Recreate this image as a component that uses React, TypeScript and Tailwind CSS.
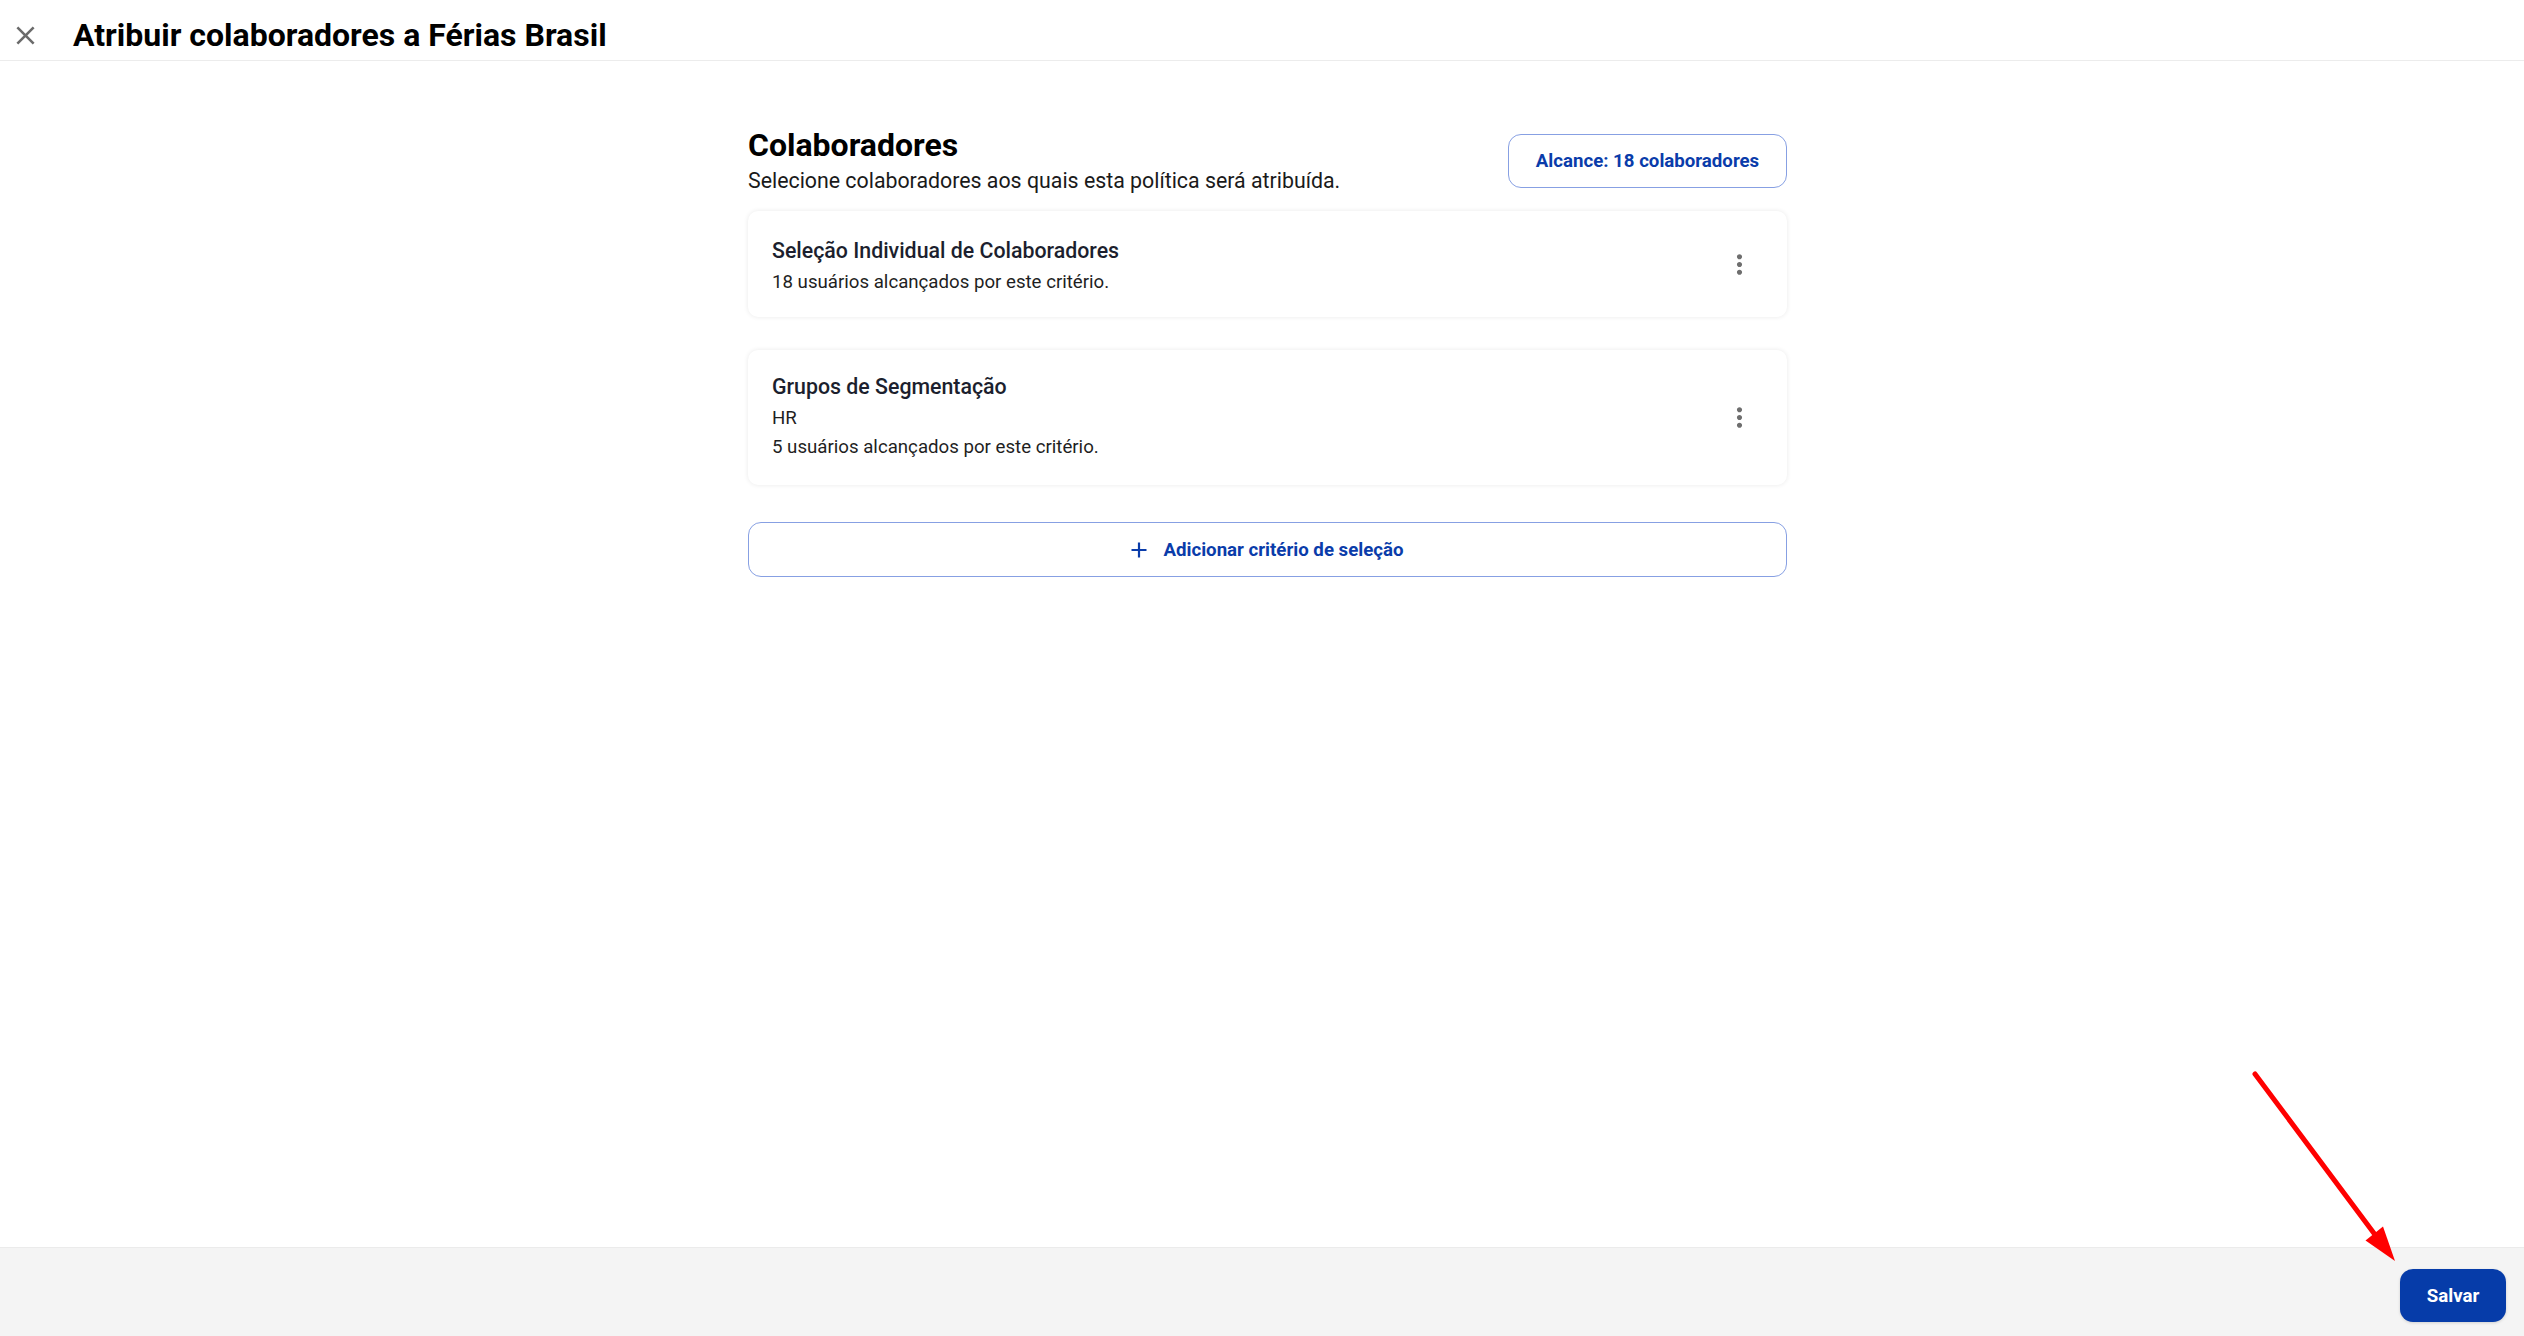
import React from "react";

function CloseIcon() {
  return (
    <svg width="31" height="31" viewBox="0 0 24 24" fill="#6b6b6b">
      <path d="M19 6.41L17.59 5 12 10.59 6.41 5 5 6.41 10.59 12 5 17.59 6.41 19 12 13.41 17.59 19 19 17.59 13.41 12z" />
    </svg>
  );
}

function MoreVert() {
  return (
    <svg width="31" height="31" viewBox="0 0 24 24" fill="#6e6e6e">
      <path d="M12 8c1.1 0 2-.9 2-2s-.9-2-2-2-2 .9-2 2 .9 2 2 2zm0 2c-1.1 0-2 .9-2 2s.9 2 2 2 2-.9 2-2-.9-2-2-2zm0 6c-1.1 0-2 .9-2 2s.9 2 2 2 2-.9 2-2-.9-2-2-2z" />
    </svg>
  );
}

function PlusIcon() {
  return (
    <svg width="16" height="16" viewBox="0 0 16 16" fill="none" stroke="#0a3caa" strokeWidth="2.2">
      <path d="M8 0.5v15M0.5 8h15" />
    </svg>
  );
}

export default function App() {
  return (
    <div className="relative min-h-screen flex flex-col bg-white font-[Roboto,sans-serif] text-black">
      <header className="h-[61px] border-b border-[#ececec] pt-[15px] shrink-0">
        <div className="flex items-center h-[40px]">
          <div className="w-[31px] h-[31px] ml-[10px] flex items-center justify-center">
            <CloseIcon />
          </div>
          <h1 className="ml-[32px] text-[32px] leading-[40px] font-bold text-black">
            Atribuir colaboradores a Férias Brasil
          </h1>
        </div>
      </header>

      <main className="flex-1 flex justify-center pl-[11px] pt-[66px]">
        <div className="w-[1039px]">
          <div className="flex justify-between items-start">
            <div>
              <h2 className="text-[32px] leading-[37px] font-bold text-black">Colaboradores</h2>
              <p className="mt-[3px] text-[21.33px] leading-[28px] text-[#1a1a1a]">
                Selecione colaboradores aos quais esta política será atribuída.
              </p>
            </div>
            <button className="mt-[7px] w-[279px] h-[54px] rounded-[13px] border border-[#87a0e3] bg-white flex items-center justify-center text-[18.67px] font-bold text-[#0a3caa]">
              Alcance: 18 colaboradores
            </button>
          </div>

          <div className="mt-[16px] rounded-[10px] bg-white shadow-[0_0_5px_rgba(0,0,0,0.09)] flex items-center justify-between pl-[24px] pr-[32px]">
            <div className="pt-[26px] pb-[22px]">
              <div className="text-[21.33px] leading-[28px] font-medium text-[#1c1f2e]">
                Seleção Individual de Colaboradores
              </div>
              <div className="mt-[4px] text-[18.67px] leading-[26px] text-[#1f1f1f]">
                18 usuários alcançados por este critério.
              </div>
            </div>
            <MoreVert />
          </div>

          <div className="mt-[33px] rounded-[10px] bg-white shadow-[0_0_5px_rgba(0,0,0,0.09)] flex items-center justify-between pl-[24px] pr-[32px]">
            <div className="pt-[23px] pb-[25px]">
              <div className="text-[21.33px] leading-[28px] font-medium text-[#1c1f2e]">
                Grupos de Segmentação
              </div>
              <div className="mt-[4px] text-[18.67px] leading-[26px] text-[#1f1f1f]">HR</div>
              <div className="mt-[3px] text-[18.67px] leading-[26px] text-[#1f1f1f]">
                5 usuários alcançados por este critério.
              </div>
            </div>
            <MoreVert />
          </div>

          <button className="mt-[37px] w-full h-[55px] rounded-[13px] border border-[#87a0e3] bg-white flex items-center justify-center gap-[16px] text-[18.67px] font-bold text-[#0a3caa]">
            <PlusIcon />
            <span>Adicionar critério de seleção</span>
          </button>
        </div>
      </main>

      <footer className="h-[89px] shrink-0 bg-[#f4f4f4] border-t border-[#ebebeb] flex justify-end items-start pt-[21px] pr-[18px]">
        <button className="w-[106px] h-[53px] rounded-[13px] bg-[#063ca9] text-white text-[18.67px] font-bold shadow-[0_1px_3px_rgba(0,0,0,0.15)]">
          Salvar
        </button>
      </footer>

      <svg className="absolute left-0 top-0 pointer-events-none" width="2524" height="1336" viewBox="0 0 2524 1336">
        <line x1="2255" y1="1074" x2="2376" y2="1236" stroke="#ff0000" strokeWidth="5" strokeLinecap="round" />
        <polygon points="2395,1261 2365.5,1240.5 2383,1226.5" fill="#ff0000" />
      </svg>
    </div>
  );
}
